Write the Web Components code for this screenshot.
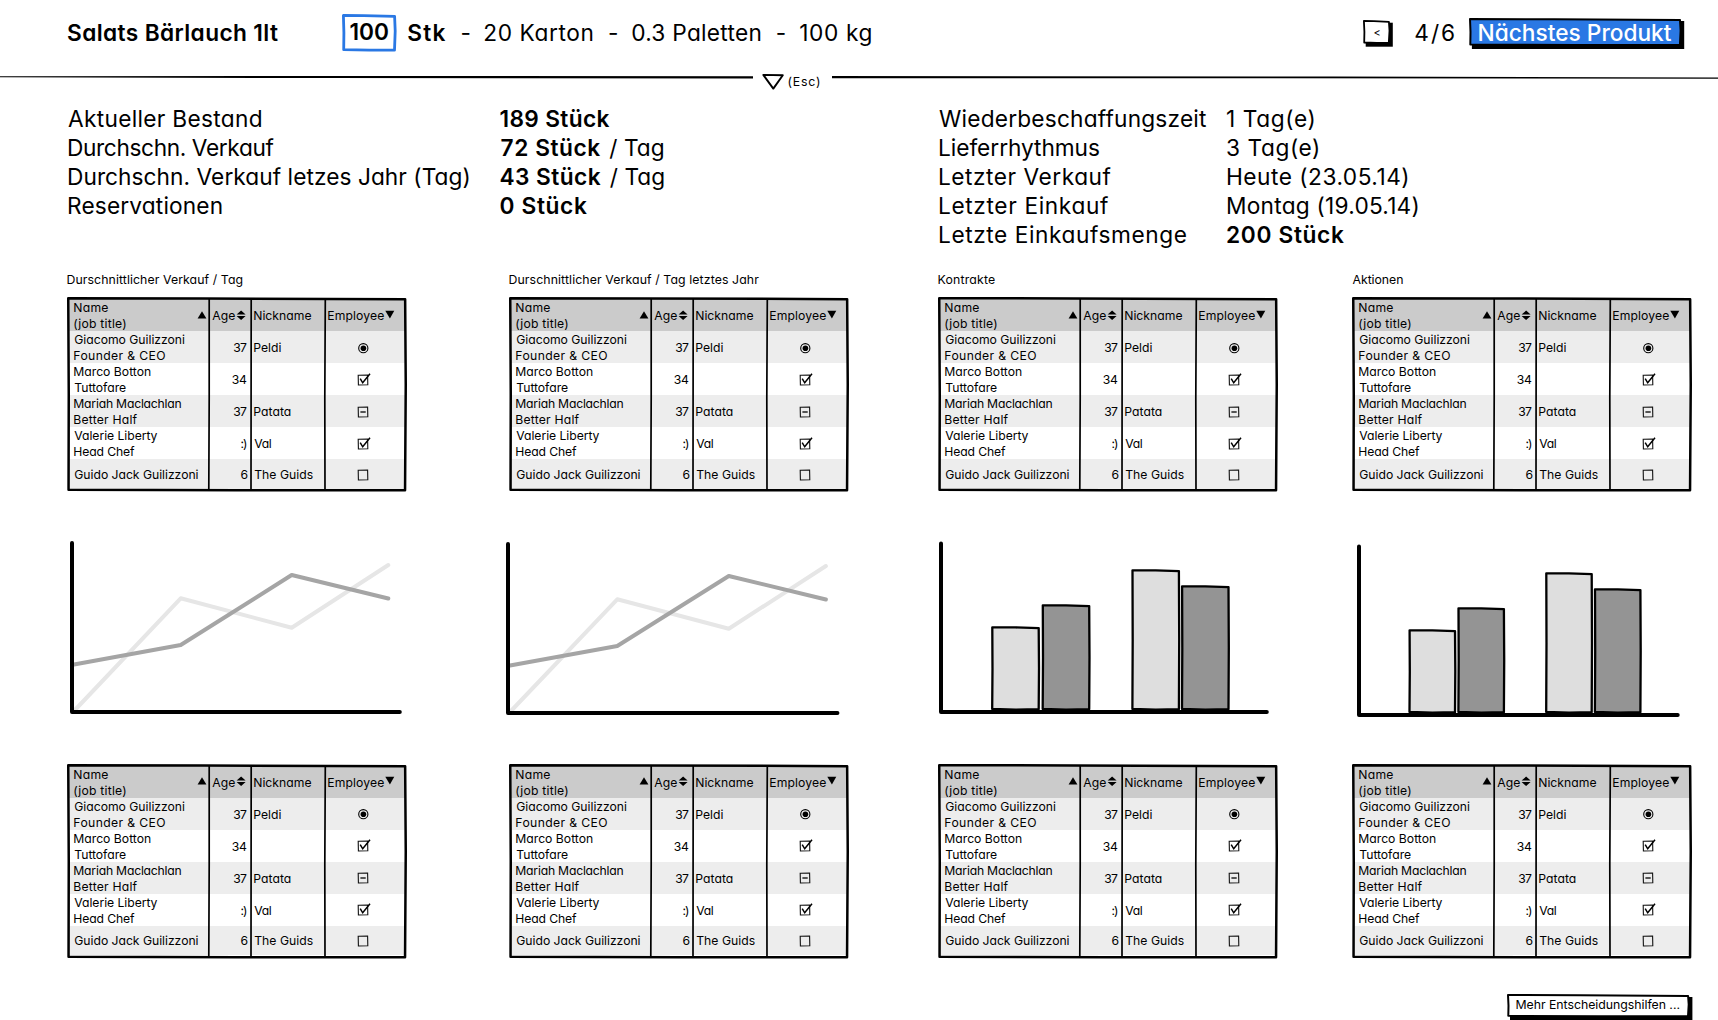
<!DOCTYPE html>
<html lang="de">
<head>
<meta charset="utf-8">
<title>Salats Bärlauch 1lt</title>
<style>
  html, body { margin: 0; background: #fff; }
  body { width: 1718px; height: 1020px; overflow: hidden; color: #000;
    font-family: Inter, "Liberation Sans", sans-serif; font-size: 22.7px; line-height: 29px;
    font-feature-settings: "cv11" 1, "calt" 0; }
</style>
</head>
<body>
<product-page></product-page>
<script>
const pen = document.createElement('canvas').getContext('2d');
const define = (name, cls) => customElements.define(name, cls);

/* Text whose ink starts at the left edge of its box and spans `w` pixels. */
define('fit-text', class extends HTMLElement {
  connectedCallback() {
    const root = this.attachShadow({ mode: 'open' });
    root.innerHTML = `<style>
      :host { display: block; flex: none; white-space: pre; }
      :host([b]) { font-weight: 600; }
      span { display: inline-block; }
    </style><span><slot></slot></span>`;
    const span = root.querySelector('span');
    const w = parseFloat(this.getAttribute('w'));
    const text = this.textContent;
    this.style.width = w + 'px';
    const cs = getComputedStyle(this);
    pen.font = `${cs.fontWeight} ${cs.fontSize} ${cs.fontFamily}`;
    const m = pen.measureText(text);
    const left = -m.actualBoundingBoxLeft;
    const right = m.width - m.actualBoundingBoxRight;
    const ink = span.getBoundingClientRect().width - left - right;
    const n = text.length - 1;
    if (n > 0) span.style.letterSpacing = ((w - ink) / n) + 'px';
    span.style.marginLeft = -left + 'px';
  }
});

/* Hand-drawn box with optional hard shadow. */
define('sketch-frame', class extends HTMLElement {
  connectedCallback() {
    const a = (k, d) => this.hasAttribute(k) ? this.getAttribute(k) : d;
    const w = +a('w'), h = +a('h'), s = +a('sw', 2.4), d = +a('shadow', 0), i = s / 2;
    const path = `M${i} ${i} L${w * .4} ${i + .2} L${w - i - .6} ${i + .9} L${w - i} ${h * .45} L${w - i - .7} ${h - i - .2} L${w * .5} ${h - i - .1} L${i + .3} ${h - i - .6} L${i + .5} ${h * .5} Z`;
    this.attachShadow({ mode: 'open' }).innerHTML = `<style>
      :host { display: block; position: relative; flex: none; box-sizing: border-box; width: ${w}px; height: ${h}px; }
      svg { position: absolute; left: 0; top: 0; overflow: visible; pointer-events: none; }
      .in { position: relative; display: flow-root; }
      .over { z-index: 1; }
    </style>
    <svg width="${w}" height="${h}">${d ? `<path transform="translate(${d} ${d})" d="M0 0H${w - .3}V${h}H0Z"/>` : ''}<path d="${path}" fill="${a('fill', '#fff')}"/></svg>
    <div class="in"><slot></slot></div>
    <svg class="over" width="${w}" height="${h}"><path d="${path}" fill="none" stroke="${a('stroke', '#000')}" stroke-width="${s}" stroke-linejoin="round"/></svg>`;
  }
});

define('top-bar', class extends HTMLElement {
  connectedCallback() {
    this.attachShadow({ mode: 'open' }).innerHTML = `<style>
      :host { display: flex; height: 70px; padding-left: 68px; align-items: flex-start; }
      fit-text { margin-top: 18.2px; }
      .qty fit-text { margin: 3px 0 0 8.5px; }
      .next fit-text { margin: 0 0 0 9.5px; color: #fff; font-weight: 500; }
      .prev fit-text { margin: 4.5px 0 0 10.5px; font-size: 11px; line-height: 16px; }
    </style>
    <fit-text b w="210">Salats Bärlauch 1lt</fit-text>
    <sketch-frame class="qty" w="54.6" h="37.7" sw="2.8" stroke="#2a78e4" style="margin:14px 0 0 64px"><fit-text b w="37.5">100</fit-text></sketch-frame>
    <fit-text b w="37.3" style="margin-left:11.7px">Stk</fit-text>
    <fit-text w="6" style="margin-left:16px">-</fit-text>
    <fit-text w="108.2" style="margin-left:16.7px">20 Karton</fit-text>
    <fit-text w="6" style="margin-left:16.5px">-</fit-text>
    <fit-text w="128.3" style="margin-left:17.2px">0.3 Paletten</fit-text>
    <fit-text w="6" style="margin-left:16.2px">-</fit-text>
    <fit-text w="71.4" style="margin-left:17.5px">100 kg</fit-text>
    <sketch-frame class="prev" w="27.4" h="24" sw="1.8" shadow="2.7" style="margin:20.2px 0 0 491.4px"><fit-text w="6.5">&lt;</fit-text></sketch-frame>
    <fit-text w="38.8" style="margin-left:25px">4/6</fit-text>
    <sketch-frame class="next" w="212.6" h="28.2" sw="2" shadow="2.9" fill="#2a78e4" style="margin:17.6px 0 0 15px"><fit-text w="193.2">Nächstes Produkt</fit-text></sketch-frame>`;
  }
});

define('fold-line', class extends HTMLElement {
  connectedCallback() {
    this.attachShadow({ mode: 'open' }).innerHTML = `<style>
      :host { display: flex; height: 24px; }
      svg { flex: none; display: block; }
      fit-text { font-size: 12.3px; line-height: 16px; margin: 3.5px 12px 0 4.5px; }
    </style>
    <svg width="753" height="24"><path d="M0 6.2L300 6L753 6.2V8.4L330 8.1L0 7.2Z"/></svg>
    <svg width="31" height="24"><path d="M10.3 4.9L29.8 5.2L20.3 18.6Z" fill="#fff" stroke="#000" stroke-width="1.9" stroke-linejoin="round"/></svg>
    <fit-text w="31.5">(Esc)</fit-text>
    <svg width="886" height="24"><path d="M0 6.1L500 6.6L886 7.5V8.7L300 8.2L0 8.3Z"/></svg>`;
  }
});

define('info-list', class extends HTMLElement {
  connectedCallback() {
    this.attachShadow({ mode: 'open' }).innerHTML = `<style>
      :host { display: flex; flex-direction: column; flex: none; }
    </style><slot></slot>`;
  }
});

/* Hand-drawn glyphs used in table headers and the Employee column. */
const box = '<path d="M2.2 3.2L11.6 3L11.8 12.8L2.4 13Z" fill="none" stroke="#111" stroke-width="1.1"/>';
const GLYPHS = {
  radio: '<circle cx="7.3" cy="8.2" r="4.6" fill="none" stroke="#000" stroke-width="1.1"/><circle cx="7.4" cy="8.2" r="2.8"/>',
  check: box + '<path d="M4.2 6.6L6.7 10.8L14 1.8" fill="none" stroke="#000" stroke-width="1.5"/>',
  minus: box + '<path d="M4.4 8H9.7" stroke="#000" stroke-width="1.3"/>',
  empty: box,
  up: '<path d="M0.6 11.5L5 4.3L9.4 11.5Z"/>',
  down: '<path d="M0.3 3.8H9.3L4.9 11.5Z"/>',
  both: '<path d="M-.4 6.6L4.1 2.6L8.6 6.6ZM-.4 8H8.6L4.1 12Z"/>'
};
define('sketch-glyph', class extends HTMLElement {
  connectedCallback() {
    this.attachShadow({ mode: 'open' }).innerHTML = `<style>
      :host { display: block; flex: none; } svg { display: block; overflow: visible; }
    </style><svg width="16" height="16">${GLYPHS[this.getAttribute('kind')]}</svg>`;
  }
});

const ROWS = [
  [[['Giacomo Guilizzoni', 110.7], ['Founder & CEO', 91]], ['37', 13.7], ['Peldi', 27.3], 'radio'],
  [[['Marco Botton', 76.7], ['Tuttofare', 51.7]], ['34', 15.3], null, 'check'],
  [[['Mariah Maclachlan', 107.3], ['Better Half', 63.3]], ['37', 13.7], ['Patata', 36.3], 'minus'],
  [[['Valerie Liberty', 83.3], ['Head Chef', 60.7]], [':)', 6.6], ['Val', 16.7], 'check'],
  [[['Guido Jack Guilizzoni', 124.3]], ['6', 6.6], ['The Guids', 58.6], 'empty']
];
const t = c => c ? `<fit-text w="${c[1]}">${c[0].replace('&', '&amp;')}</fit-text>` : '';

define('people-table', class extends HTMLElement {
  connectedCallback() {
    this.attachShadow({ mode: 'open' }).innerHTML = `<style>
      :host { display: block; font-size: 12.2px; line-height: 16px; width: 340px; }
      .t { padding: 2px 2px 0; height: 192px; position: relative; }
      .r { display: grid; grid-template-columns: 140px 42px 74px 80px; height: 32px; align-items: center; }
      .r:nth-child(even) { background: #ededed; }
      .r:first-child { background: #cbcbcb; }
      .r.last { height: 29.5px; }
      .r > div { display: flex; align-items: center; padding-top: 1px; }
      .r.last > div { padding-top: 1.5px; }
      .r > .n { padding-left: 5.3px; justify-content: space-between; }
      .r > .a { justify-content: flex-end; padding-right: 4px; }
      .r > .k { padding-left: 3.2px; }
      .r > .e { padding-left: 31.4px; padding-top: 0; }
      .h > .a { justify-content: flex-start; padding-right: 0; padding-left: 3.3px; }
      .r.h > .a { justify-content: flex-start; padding-right: 0; padding-left: 3.3px; }
      .r.h > .e { padding-left: 3.2px; padding-top: 1px; }
      .h .n sketch-glyph { margin-right: -4px; margin-top: -3px; }
      .h .a sketch-glyph { margin: -1px -8px 0 1.8px; }
      .h .e sketch-glyph { margin: -3px 0 0 .8px; }
      svg { position: absolute; left: 0; top: 0; }
    </style>
    <sketch-frame w="340" h="194.6" sw="2.5"><div class="t">
      <div class="r h"><div class="n"><div>${t(['Name', 34])}${t(['(job title)', 52])}</div><sketch-glyph kind="up"></sketch-glyph></div>
        <div class="a">${t(['Age', 22.9])}<sketch-glyph kind="both"></sketch-glyph></div>
        <div class="k">${t(['Nickname', 57.3])}</div>
        <div class="e">${t(['Employee', 56])}<sketch-glyph kind="down"></sketch-glyph></div></div>
      ${ROWS.map((r, i) => `<div class="r${i == 4 ? ' last' : ''}"><div class="n"><div>${r[0].map(t).join('')}</div></div><div class="a">${t(r[1])}</div><div class="k">${t(r[2])}</div><div class="e"><sketch-glyph kind="${r[3]}"></sketch-glyph></div></div>`).join('')}
      <svg width="340" height="194"><path d="M142.2 2V100L141.8 192M184.2 2L184 192M258.3 2L257.8 100L258 192" fill="none" stroke="#000" stroke-width="1.7"/></svg>
    </div></sketch-frame>`;
  }
});

define('line-chart', class extends HTMLElement {
  connectedCallback() {
    const x0 = +this.getAttribute('x0'), y0 = +this.getAttribute('y0'), k = +this.getAttribute('scale');
    const p = (...v) => 'M' + v.map((n, i) => i % 2 ? n + y0 : x0 + n * k).join(' ');
    this.attachShadow({ mode: 'open' }).innerHTML = `<style>
      :host { display: block; } svg { display: block; overflow: visible; }
    </style><svg width="346" height="180" fill="none" stroke-width="4" stroke-linecap="round" stroke-linejoin="round">
      <path stroke="#e6e6e6" d="${p(2, 171, 108.7, 58.3, 219.7, 87.7, 316.3, 25)}"/>
      <path stroke="#a5a5a5" d="${p(2, 124.5, 108.7, 105, 219.7, 35, 316.3, 58.5)}"/>
      <path stroke="#000" d="${p(0, 3, 0, 172, 327.8, 172)}"/></svg>`;
  }
});

define('bar-chart', class extends HTMLElement {
  connectedCallback() {
    const n = k => this.getAttribute(k).split(' ').map(Number);
    const xs = n('x'), ys = n('y'), [w, x0, base, end] = n('box');
    const bars = xs.map((x, i) => {
      const l = x + 1, r = x + w - 1, y = ys[i] + 1, b = base - 2.8;
      return `<path fill="${i % 2 ? '#949494' : '#dedede'}" d="M${l + .3} ${y}L${(l + r) / 2} ${y + .1}L${r - .3} ${y + .8}L${r} ${(y + b) / 2}L${r - .3} ${b}L${(l + r) / 2} ${b + .4}L${l + .2} ${b - .2}L${l + .5} ${(y + b) / 2}Z"/>`;
    }).join('');
    this.attachShadow({ mode: 'open' }).innerHTML = `<style>
      :host { display: block; } svg { display: block; }
    </style><svg width="350" height="180" stroke="#000" stroke-linejoin="round" stroke-linecap="round">
      <g stroke-width="2.3">${bars}</g><path fill="none" stroke-width="4" d="M${x0} ${base - 168.5}V${base}H${end}"/></svg>`;
  }
});

define('product-page', class extends HTMLElement {
  connectedCallback() {
    const caps = [['Durschnittlicher Verkauf / Tag', 175], ['Durschnittlicher Verkauf / Tag letztes Jahr', 249.7], ['Kontrakte', 56.5], ['Aktionen', 50.7]];
    const tables = '<people-table></people-table>'.repeat(4);
    this.attachShadow({ mode: 'open' }).innerHTML = `<style>
      :host { display: flex; flex-direction: column; width: 1718px; height: 1020px; }
      .info { display: flex; height: 168px; padding: 10px 0 0 68px; }
      .grid { display: grid; grid-template-columns: 442px 429px 414px 350px; padding-left: 67px; }
      .caps { font-size: 12.3px; line-height: 16px; height: 25px; }
      .caps fit-text { margin-left: .5px; }
      .row { display: flex; }
      .charts { height: 272.4px; padding-top: 48px; box-sizing: border-box; }
      .foot { display: flex; padding: 35px 0 0 1507px; }
      .foot fit-text { margin: 3.4px 0 0 9.5px; font-size: 12.3px; line-height: 16px; }
    </style>
    <top-bar></top-bar>
    <fold-line></fold-line>
    <div class="info">
      <info-list style="width:432.5px">
        <fit-text w="193.7">Aktueller Bestand</fit-text><fit-text w="206.5">Durchschn. Verkauf</fit-text>
        <fit-text w="400.5">Durchschn. Verkauf letzes Jahr (Tag)</fit-text><fit-text w="153.7">Reservationen</fit-text>
      </info-list>
      <info-list style="width:438.5px">
        <fit-text b w="109">189 Stück</fit-text>
        <div class="row"><fit-text b w="99.8">72 Stück</fit-text><fit-text w="54.5" style="margin-left:9px">/ Tag</fit-text></div>
        <div class="row"><fit-text b w="100.3">43 Stück</fit-text><fit-text w="54.5" style="margin-left:9px">/ Tag</fit-text></div>
        <fit-text b w="86.5">0 Stück</fit-text>
      </info-list>
      <info-list style="width:288px">
        <fit-text w="267">Wiederbeschaffungszeit</fit-text><fit-text w="160">Lieferrhythmus</fit-text>
        <fit-text w="172.5">Letzter Verkauf</fit-text><fit-text w="170">Letzter Einkauf</fit-text><fit-text w="247.8">Letzte Einkaufsmenge</fit-text>
      </info-list>
      <info-list>
        <fit-text w="86.5">1 Tag(e)</fit-text><fit-text w="91">3 Tag(e)</fit-text><fit-text w="180.3">Heute (23.05.14)</fit-text>
        <fit-text w="190.5">Montag (19.05.14)</fit-text><fit-text b w="117">200 Stück</fit-text>
      </info-list>
    </div>
    <div class="grid caps">${caps.map(t).join('')}</div>
    <div class="grid">${tables}</div>
    <div class="grid charts">
      <line-chart x0="5" y0="0" scale="1"></line-chart>
      <line-chart x0="-1" y0="1" scale="1.005"></line-chart>
      <bar-chart x="53 103.5 193.2 242.8" y="86.3 64.3 29.3 45.3" box="49 3 172 328.8"></bar-chart>
      <bar-chart x="56.3 105.2 193 241.7" y="89.3 67.3 32.3 48.3" box="48 7 175 325.7"></bar-chart>
    </div>
    <div class="grid">${tables}</div>
    <div class="foot"><sketch-frame w="182.7" h="23.4" sw="2" shadow="3"><fit-text w="162.9">Mehr Entscheidungshilfen ...</fit-text></sketch-frame></div>`;
  }
});
</script>
</body>
</html>
